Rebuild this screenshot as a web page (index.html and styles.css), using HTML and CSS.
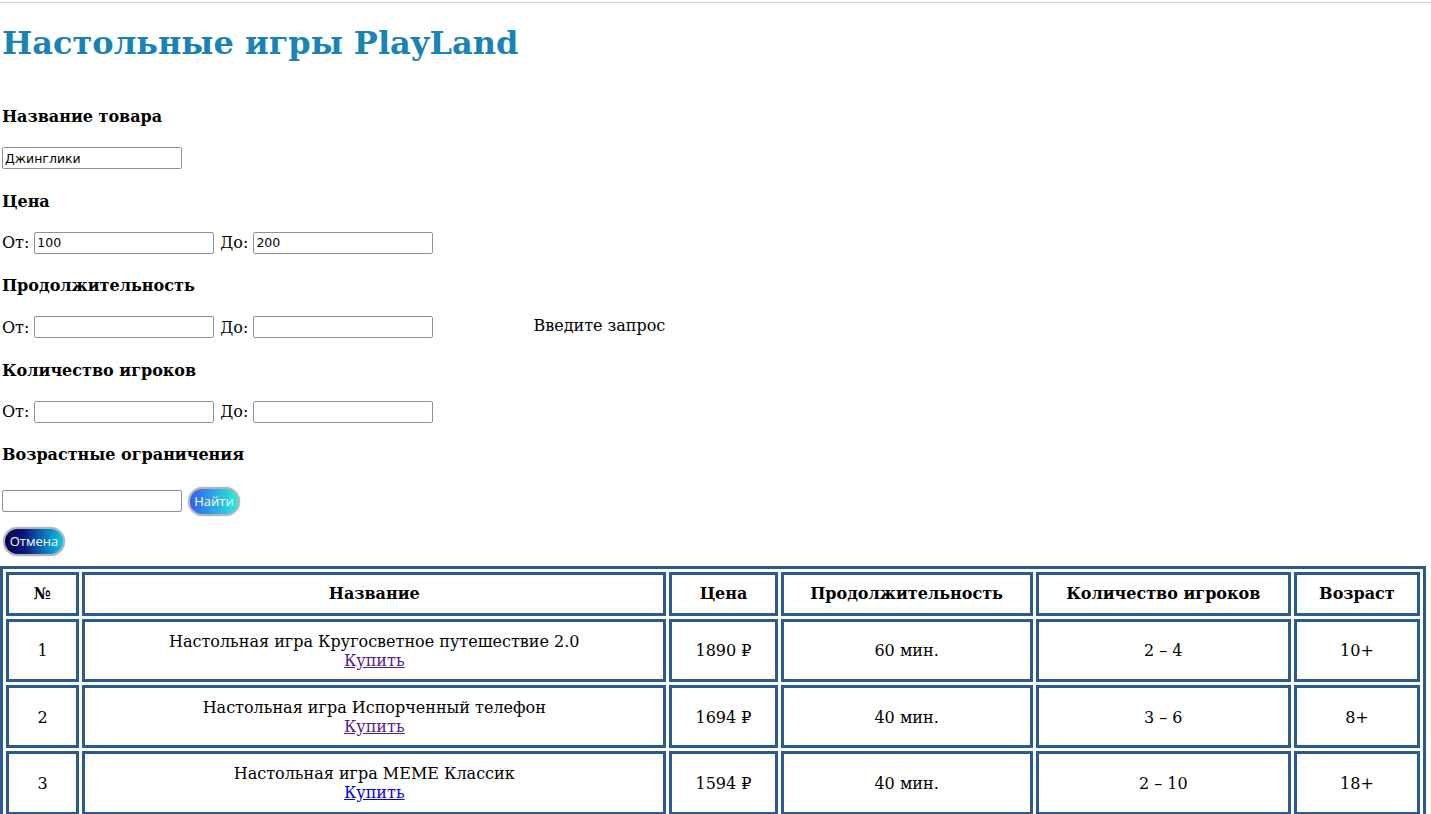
FILE: index.html
```html
<!DOCTYPE html>
<html lang="ru">
<head>
<meta charset="utf-8">
<title>Настольные игры PlayLand</title>
<link rel="stylesheet" href="styles.css">
</head>
<body>
<div class="topline"></div>
<div class="page">
  <div class="filters">
    <h1 class="title">Настольные игры PlayLand</h1>

    <div class="section first">
      <h4 class="label">Название товара</h4>
      <div class="row">
        <input class="field" type="text" value="Джинглики">
      </div>
    </div>

    <div class="section">
      <h4 class="label">Цена</h4>
      <div class="row">
        <span class="from">От:</span>
        <input class="field" type="text" value="100">
        <span class="to">До:</span>
        <input class="field" type="text" value="200">
      </div>
    </div>

    <div class="section">
      <h4 class="label">Продолжительность</h4>
      <div class="row">
        <span class="from">От:</span>
        <input class="field" type="text">
        <span class="to">До:</span>
        <input class="field" type="text">
        <span class="hint">Введите запрос</span>
      </div>
    </div>

    <div class="section">
      <h4 class="label">Количество игроков</h4>
      <div class="row">
        <span class="from">От:</span>
        <input class="field" type="text">
        <span class="to">До:</span>
        <input class="field" type="text">
      </div>
    </div>

    <div class="section last">
      <h4 class="label">Возрастные ограничения</h4>
      <div class="row tall">
        <input class="field" type="text">
        <button class="btn btn-find" type="button">Найти</button>
      </div>
    </div>

    <div class="cancel-row">
      <button class="btn btn-cancel" type="button">Отмена</button>
    </div>
  </div>

  <table class="games">
    <thead>
      <tr>
        <th class="c-num">№</th>
        <th class="c-name">Название</th>
        <th class="c-price">Цена</th>
        <th class="c-dur">Продолжительность</th>
        <th class="c-players">Количество игроков</th>
        <th class="c-age">Возраст</th>
      </tr>
    </thead>
    <tbody>
      <tr>
        <td>1</td>
        <td>Настольная игра Кругосветное путешествие 2.0<br><a class="buy visited" href="#">Купить</a></td>
        <td>1890 ₽</td>
        <td>60 мин.</td>
        <td>2 – 4</td>
        <td>10+</td>
      </tr>
      <tr>
        <td>2</td>
        <td>Настольная игра Испорченный телефон<br><a class="buy visited" href="#">Купить</a></td>
        <td>1694 ₽</td>
        <td>40 мин.</td>
        <td>3 – 6</td>
        <td>8+</td>
      </tr>
      <tr>
        <td>3</td>
        <td>Настольная игра MEME Классик<br><a class="buy" href="#">Купить</a></td>
        <td>1594 ₽</td>
        <td>40 мин.</td>
        <td>2 – 10</td>
        <td>18+</td>
      </tr>
    </tbody>
  </table>
</div>
</body>
</html>
```

FILE: styles.css
```css
html, body {
  margin: 0;
  padding: 0;
  background: #ffffff;
}

body {
  font-family: "DejaVu Serif", serif;
  font-size: 16px;
  color: #000000;
}

.topline {
  margin-top: 2px;
  border-top: 1px solid #cfcfcf;
}

.page {
  margin: 0 5px 0 0;
}

.filters {
  padding-left: 2px;
}

.title {
  margin: 22px 0 0 0;
  font-family: "DejaVu Serif", serif;
  font-weight: bold;
  font-size: 32px;
  line-height: 37px;
  color: #1a83b5;
}

.section {
  margin-top: 22.5px;
}

.section.first {
  margin-top: 45px;
}

.label {
  margin: 0;
  font-size: 16px;
  font-weight: bold;
  line-height: 19px;
}

.row {
  margin-top: 21px;
  height: 22px;
  display: flex;
  align-items: center;
  font-size: 16px;
  line-height: 19px;
}

.row.tall {
  margin-top: 22.5px;
  height: 29px;
}

.from {
  margin-right: 5px;
}

.to {
  margin-left: 6px;
  margin-right: 5px;
}

.hint {
  margin-left: 100px;
  margin-top: -4px;
}

.field {
  box-sizing: border-box;
  width: 180px;
  height: 22px;
  margin: 0;
  padding: 1px 2px;
  border: 1px solid #8f8f9d;
  border-radius: 2px;
  font-family: "DejaVu Sans", sans-serif;
  font-size: 12.5px;
  color: #000;
  background: #fff;
}

.btn {
  box-sizing: border-box;
  height: 29px;
  margin: 0;
  padding: 0;
  border: 2px solid #b4b4b4;
  border-radius: 15px;
  color: #ffffff;
  font-family: "Open Sans", sans-serif;
  font-size: 13px;
  line-height: 25px;
  text-align: center;
  box-shadow: 0 0 1px #888;
}

.btn-find {
  width: 52px;
  margin-left: 6px;
  background: linear-gradient(to right, #2f5ff0, #28f0d8);
}

.btn-cancel {
  width: 62px;
  margin-left: 1px;
  background: linear-gradient(to right, #00004a, #0a1a80 35%, #06c8f2);
}

.cancel-row {
  margin-top: 11px;
  height: 29px;
}

.games {
  margin-top: 10px;
  width: 100%;
  border: 3px solid #2b5a8c;
  border-spacing: 3px;
}

.games th,
.games td {
  border: 3px solid #2b5a8c;
  padding: 10px;
  text-align: center;
  font-size: 16px;
  line-height: 18.6px;
}

.games td {
  padding-top: 11px;
  padding-bottom: 9px;
}

.games th {
  font-weight: bold;
}

.c-num { width: 47px; }
.c-name { width: 558px; }
.c-price { width: 82px; }
.c-dur { width: 226px; }
.c-players { width: 229px; }
.c-age { width: 100px; }

.buy {
  color: #0000ee;
  text-decoration: underline;
}

.buy.visited {
  color: #551a8b;
}
```
